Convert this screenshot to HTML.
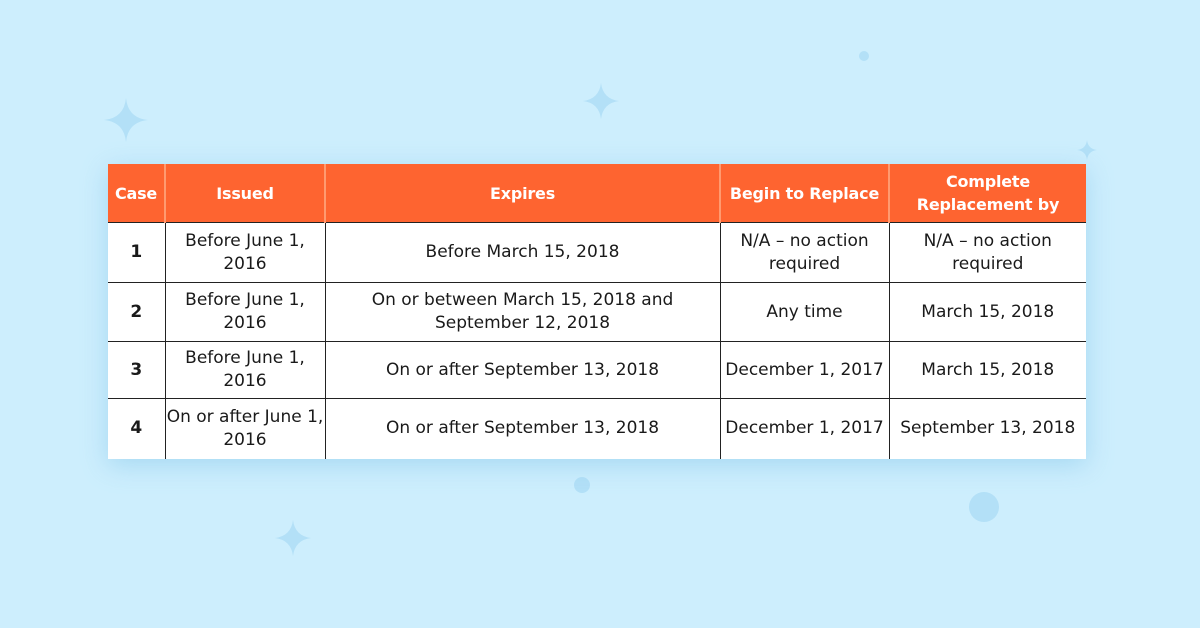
<!DOCTYPE html>
<html><head><style>
body{margin:0;width:1200px;height:628px;background:#cdeefd;position:relative;overflow:hidden;font-family:"DejaVu Sans","Liberation Sans",sans-serif;}
.s{position:absolute}
#t{position:absolute;left:108px;top:164px;width:978px;border-collapse:collapse;box-shadow:0 6px 24px rgba(120,190,230,.45);background:#fff}
#t td,#t th{padding:0;text-align:center;vertical-align:middle;font-size:17px;line-height:23px;color:#1a1a1a}
#t th{background:#fe6430;color:#fff;font-weight:bold;height:58px;border-left:2px solid #ff9a70;font-size:16px;letter-spacing:-0.2px}
#t th:first-child{border-left:none}
#t td{border-left:1px solid #222;border-top:1px solid #222;background:#fff}
#t td:first-child{border-left:none;font-weight:bold}
</style></head><body>
<svg class="s" style="left:0;top:0" width="1200" height="628">
<g fill="#b3e0f7">
<path d="M126 98 Q128 118 148 120 Q128 122 126 142 Q124 122 104 120 Q124 118 126 98Z"/>
<path d="M601 83 Q603 99 619 101 Q603 103 601 119 Q599 103 583 101 Q599 99 601 83Z"/>
<path d="M293 520 Q295 536 311 538 Q295 540 293 556 Q291 540 275 538 Q291 536 293 520Z"/>
<path d="M1087 140 Q1088 149 1097 150 Q1088 151 1087 160 Q1086 151 1077 150 Q1086 149 1087 140Z"/>
<circle cx="864" cy="56" r="5"/>
<circle cx="582" cy="485" r="8"/>
<circle cx="984" cy="507" r="15"/>
</g></svg>
<table id="t">
<colgroup><col style="width:57px"><col style="width:160px"><col style="width:395px"><col style="width:169px"><col style="width:197px"></colgroup>
<tr><th>Case</th><th>Issued</th><th>Expires</th><th>Begin to Replace</th><th>Complete<br>Replacement by</th></tr>
<tr style="height:60px"><td>1</td><td>Before June 1,<br>2016</td><td>Before March 15, 2018</td><td>N/A – no action<br>required</td><td>N/A – no action<br>required</td></tr>
<tr style="height:59px"><td>2</td><td>Before June 1,<br>2016</td><td>On or between March 15, 2018 and<br>September 12, 2018</td><td>Any time</td><td>March 15, 2018</td></tr>
<tr style="height:57px"><td>3</td><td>Before June 1,<br>2016</td><td>On or after September 13, 2018</td><td>December 1, 2017</td><td>March 15, 2018</td></tr>
<tr style="height:60px"><td>4</td><td>On or after June 1,<br>2016</td><td>On or after September 13, 2018</td><td>December 1, 2017</td><td>September 13, 2018</td></tr>
</table>
</body></html>
